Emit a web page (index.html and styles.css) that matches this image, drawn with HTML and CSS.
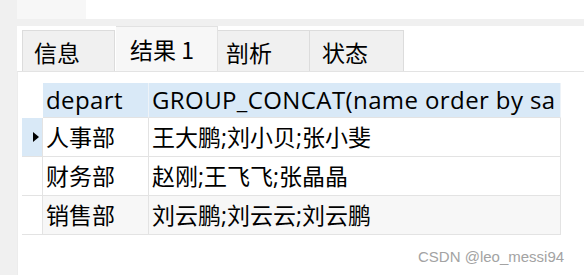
FILE: index.html
```html
<!DOCTYPE html>
<html lang="zh-CN">
<head>
<meta charset="utf-8">
<title>结果 1</title>
<link rel="stylesheet" href="styles.css">
</head>
<body>
<div class="app">
  <div class="main">
    <div class="topbar">
      <div class="top-light"></div>
      <div class="top-white"></div>
    </div>
    <div class="tabbar">
      <div class="tab tab-info">信息</div>
      <div class="tab tab-active">结果 1</div>
      <div class="tab tab-prof">剖析</div>
      <div class="tab tab-state">状态</div>
    </div>
    <div class="content">
      <div class="grid">
        <div class="cell ind ind-head"></div>
        <div class="cell head">depart</div>
        <div class="cell head">GROUP_CONCAT(name order by sa</div>

        <div class="cell ind ind-current"><span class="arrow"></span></div>
        <div class="cell">人事部</div>
        <div class="cell">王大鹏;刘小贝;张小斐</div>

        <div class="cell ind"></div>
        <div class="cell">财务部</div>
        <div class="cell">赵刚;王飞飞;张晶晶</div>

        <div class="cell ind"></div>
        <div class="cell alt">销售部</div>
        <div class="cell alt">刘云鹏;刘云云;刘云鹏</div>
      </div>
    </div>
  </div>
  <div class="watermark">CSDN @leo_messi94</div>
</div>
</body>
</html>
```

FILE: styles.css
```css
html, body {
  margin: 0;
  padding: 0;
}
body {
  background: #f0f0f0;
  width: 584px;
  height: 275px;
  overflow: hidden;
  font-family: "Open Sans", "Noto Sans CJK SC", sans-serif;
  color: #000;
}
.app {
  position: relative;
  width: 584px;
  height: 275px;
  padding-left: 17px;
  box-sizing: border-box;
  display: flex;
}
.main {
  flex: 1;
  display: flex;
  flex-direction: column;
}
.topbar {
  height: 19px;
  display: flex;
  margin-bottom: 7px;
}
.top-light {
  width: 69px;
  background: #f7f7f7;
}
.top-white {
  flex: 1;
  background: #ffffff;
}
.tabbar {
  height: 45px;
  background: #ffffff;
  display: flex;
  align-items: flex-end;
  padding-left: 5px;
}
.tab {
  box-sizing: border-box;
  height: 41px;
  background: #f0f0f0;
  border: 1px solid #dcdcdc;
  border-bottom: none;
  display: flex;
  align-items: center;
  font-family: "Noto Sans CJK SC", sans-serif;
  font-size: 23px;
  line-height: 1;
  padding-top: 2px;
}
.tab + .tab {
  border-left: none;
}
.tab-info {
  width: 93px;
  padding-left: 11px;
}
.tab-active {
  width: 102px;
  height: 45px;
  background: #f7f7f7;
  border-color: #e2e2e2;
  padding-left: 14px;
  padding-top: 0;
  margin-left: 1px;
}
.tab-prof {
  width: 92px;
  padding-left: 8px;
}
.tab-state {
  width: 94px;
  padding-left: 12px;
}
.content {
  flex: 1;
  background: #ffffff;
  border-top: 1px solid #e3e3e3;
  border-left: 1px solid #ececec;
  padding-top: 11px;
  padding-left: 4px;
}
.grid {
  display: grid;
  grid-template-columns: 21px 106px 412px;
  grid-template-rows: 35px 39px 39px 39px;
}
.cell {
  box-sizing: border-box;
  border-right: 1px solid #e3e3e3;
  border-bottom: 1px solid #e3e3e3;
  font-size: 23px;
  line-height: 1;
  display: flex;
  align-items: center;
  padding-left: 3px;
  white-space: nowrap;
  overflow: hidden;
}
.head {
  background: #d9e9f7;
  border-right-color: #eef3f8;
  border-bottom-color: #e3e3e3;
  font-size: 24px;
  letter-spacing: 0.4px;
}
.ind {
  padding-left: 0;
  justify-content: flex-end;
  padding-right: 3px;
}
.ind-head {
  border: none;
}
.ind-current {
  background: #d9e9f7;
}
.arrow {
  width: 0;
  height: 0;
  border-top: 5px solid transparent;
  border-bottom: 5px solid transparent;
  border-left: 6px solid #000;
}
.alt {
  background: #f7f7f7;
}
.watermark {
  position: absolute;
  left: 418px;
  top: 248px;
  font-family: "Liberation Sans", Arial, sans-serif;
  font-size: 15px;
  color: #a3a3a3;
}
```
